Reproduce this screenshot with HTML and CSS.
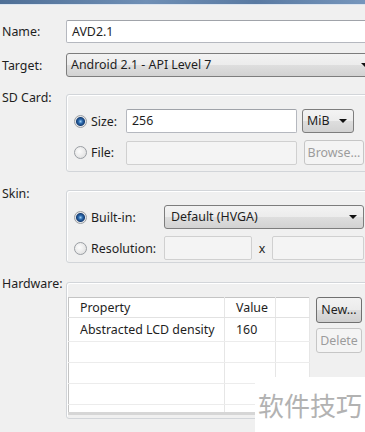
FILE: index.html
```html
<!DOCTYPE html>
<html lang="en">
<head>
    <meta charset="UTF-8">
    <meta name="viewport" content="width=device-width, initial-scale=1.0">
    <title>Create new Android Virtual Device (AVD)</title>
    <link rel="stylesheet" href="styles.css">
</head>
<body>
    <div class="titlebar"></div>
    <section class="form">
        <div class="row row-name">
            <span class="label">Name:</span>
            <div class="textbox">AVD2.1</div>
        </div>
        <div class="row row-target">
            <span class="label">Target:</span>
            <div class="combo combo-wide">Android 2.1 - API Level 7<span class="arrow"></span></div>
        </div>

        <div class="row row-group row-sd">
            <span class="label">SD Card:</span>
            <div class="group group-sd">
                <div class="line">
                    <span class="option opt-sd"><span class="radio checked"></span>Size:</span>
                    <div class="textbox size-box">256</div>
                    <div class="combo combo-unit">MiB<span class="arrow"></span></div>
                </div>
                <div class="line">
                    <span class="option opt-sd"><span class="radio"></span>File:</span>
                    <div class="textbox disabled size-box"></div>
                    <div class="button disabled browse">Browse...</div>
                </div>
            </div>
        </div>

        <div class="row row-group row-skin">
            <span class="label">Skin:</span>
            <div class="group group-skin">
                <div class="line">
                    <span class="option opt-skin"><span class="radio checked"></span>Built-in:</span>
                    <div class="combo combo-skin">Default (HVGA)<span class="arrow"></span></div>
                </div>
                <div class="line">
                    <span class="option opt-skin"><span class="radio"></span>Resolution:</span>
                    <div class="textbox disabled res-box"></div>
                    <span class="times">x</span>
                    <div class="textbox disabled res-box res-last"></div>
                </div>
            </div>
        </div>

        <div class="row row-group row-hw">
            <span class="label">Hardware:</span>
            <div class="group group-hw">
                <table class="props">
                    <tr class="head">
                        <td class="col-prop">Property</td>
                        <td class="col-val">Value</td>
                        <td class="col-pad"></td>
                    </tr>
                    <tr class="first"><td>Abstracted LCD density</td><td>160</td><td></td></tr>
                    <tr><td></td><td></td><td></td></tr>
                    <tr><td></td><td></td><td></td></tr>
                    <tr><td></td><td></td><td></td></tr>
                    <tr class="cut"><td></td><td></td><td></td></tr>
                </table>
                <div class="side-buttons">
                    <div class="button new">New...</div>
                    <div class="button disabled">Delete</div>
                </div>
            </div>
        </div>
    </section>

    <div class="watermark">软件技巧</div>
</body>
</html>
```

FILE: styles.css
```css
body {
    margin: 0;
    background: #f0f0f0;
    font-family: "Noto Sans", "Noto Sans CJK SC", sans-serif;
    font-size: 12.4px;
    color: #1e1e1e;
    overflow: hidden;
    width: 365px;
    height: 432px;
    position: relative;
}
.titlebar {
    height: 4px;
    background: linear-gradient(90deg, #4f6f96, #6f8fb5 40%, #5a7aa2 70%, #7696bc);
    border-bottom: 1px solid #dbe5f1;
}
.form {
    width: 376px;
    padding-top: 15px;
}
.row {
    display: flex;
    align-items: center;
}
.label {
    width: 64px;
    padding-left: 2px;
    flex-shrink: 0;
}
.row-target {
    margin-top: 10px;
}
.row-group {
    align-items: flex-start;
}
.row-group .label {
    margin-top: -5px;
}
.row-sd {
    margin-top: 17px;
}
.row-skin {
    margin-top: 18px;
}
.row-hw {
    margin-top: 19px;
}
.row-hw .label {
    margin-top: -7px;
}

/* text fields */
.textbox {
    flex: 1;
    height: 21px;
    line-height: 21px;
    padding: 0 5px;
    background: #fff;
    border: 1px solid #b5b8bf;
    border-top-color: #a0a3a9;
    border-radius: 2px;
}
.textbox.disabled {
    background: #f4f4f4;
    border-color: #d0d0d0;
}

/* combo boxes */
.combo {
    position: relative;
    height: 22px;
    line-height: 22px;
    padding: 0 4px;
    border: 1px solid #7d7d7d;
    border-radius: 3px;
    background: linear-gradient(#f3f3f3, #ececec 50%, #dedede 51%, #d2d2d2);
}
.combo-wide {
    flex: 1;
}
.arrow {
    position: absolute;
    right: 6px;
    top: 9px;
    border-left: 4px solid transparent;
    border-right: 4px solid transparent;
    border-top: 4px solid #111;
}
.combo-unit {
    flex: 0 0 42px;
    margin-left: 5px;
    margin-right: 10px;
}
.combo-skin {
    flex: 1;
    padding-left: 6px;
}

/* group boxes */
.group {
    flex: 1;
    border: 1px solid #d2d5d9;
    border-radius: 3px;
    box-shadow: inset 1px 1px 0 #fff;
    box-sizing: border-box;
}
.group-sd {
    height: 78px;
    padding: 14px 11px 0 7px;
}
.group-skin {
    height: 73px;
    padding: 14px 11px 0 7px;
}
.group-hw {
    height: 137px;
    padding: 14px 11px 0 1px;
    display: flex;
    align-items: flex-start;
}
.line {
    display: flex;
    align-items: center;
}
.line + .line {
    margin-top: 7px;
}
.option {
    display: flex;
    align-items: center;
    flex-shrink: 0;
}
.opt-sd {
    width: 52px;
}
.opt-skin {
    width: 90px;
}
.radio {
    width: 11px;
    height: 11px;
    margin-right: 4px;
    border: 1px solid #9a9ea3;
    border-radius: 50%;
    background: radial-gradient(circle at 40% 40%, #fcfcfc, #dadada);
    box-sizing: content-box;
}
.radio.checked {
    background: radial-gradient(circle, #9ed0f5 0, #2f6db0 2px, #163f76 4px, #e6e6e6 5px, #f7f7f7);
}
.line .textbox {
    height: 22px;
    line-height: 22px;
}
.res-box {
    flex: 0 0 76px;
}
.res-last {
    flex: 1;
}
.times {
    width: 20px;
    text-align: center;
}

/* buttons */
.button {
    height: 23px;
    line-height: 23px;
    text-align: center;
    border: 1px solid #707070;
    border-radius: 3px;
    background: linear-gradient(#f2f2f2, #ebebeb 50%, #dddddd 51%, #cfcfcf);
}
.button.disabled {
    color: #9c9c9c;
    border-color: #c6c6c6;
    background: #f4f4f4;
}
.browse {
    flex: 0 0 58px;
    margin-left: 7px;
}
.side-buttons {
    display: flex;
    flex-direction: column;
    gap: 5px;
    margin-left: 6px;
    width: 46px;
}
.side-buttons .new {
    height: 24px;
}

/* hardware table */
.props {
    width: 242px;
    border-collapse: collapse;
    background: #fff;
    border: 1px solid #c4c4c4;
    border-bottom: 3px solid #d6d6d6;
}
.props td {
    height: 20px;
    padding: 0 0 0 11px;
    border-right: 1px solid #e6e6e6;
    border-bottom: 1px solid #ececec;
}
.props .head td {
    height: 19px;
    border-bottom-color: #e2e2e2;
}
.props .first td {
    height: 23px;
}
.props .cut td {
    height: 7px;
    border-bottom: none;
}
.col-prop {
    width: 144px;
}
.col-val {
    width: 39px;
}

.watermark {
    position: absolute;
    left: 255px;
    top: 377px;
    width: 110px;
    height: 55px;
    background: #fff;
    color: #b2b2b2;
    font-family: "Noto Sans CJK SC", sans-serif;
    font-size: 26px;
    line-height: 55px;
    text-indent: 3px;
}
```
